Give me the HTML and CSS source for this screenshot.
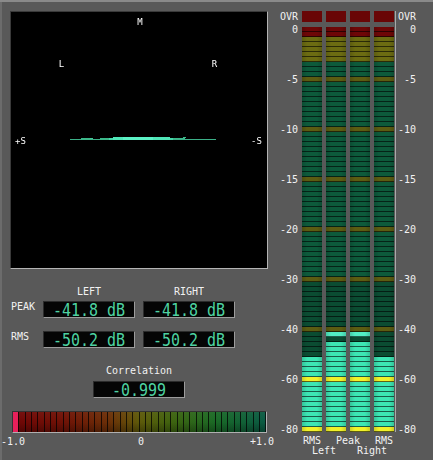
FILE: index.html
```html
<!DOCTYPE html>
<html lang="en">
<head>
  <meta charset="UTF-8" />
  <meta name="viewport" content="width=device-width, initial-scale=1.0"/>
  <title>Stereo Meter</title>
  <link rel="stylesheet" href="styles.css">
</head>
<body>

  <div class="window">
    <div class="left-panel">

      <div class="scope">
        <svg width="256" height="256" viewBox="0 0 256 256">
          <g class="scope-labels">
            <text x="129" y="12.5">M</text>
            <text x="50.5" y="54.5">L</text>
            <text x="203.5" y="54.5">R</text>
            <text x="9.5" y="131.5">+S</text>
            <text x="245.5" y="131.5">-S</text>
          </g>
          <rect x="59" y="127" width="146" height="1" fill="#3cb088"/>
          <rect x="70" y="126" width="9" height="2" fill="#3cb88a"/>
          <rect x="79" y="126" width="3" height="1" fill="#46c898"/>
          <rect x="89" y="126" width="9" height="2" fill="#3cb88a"/>
          <rect x="98" y="126" width="64" height="2" fill="#46d8aa"/>
          <rect x="102" y="125" width="57" height="3" fill="#50e6b8"/>
          <rect x="112" y="125" width="30" height="3" fill="#5cf2c6"/>
          <rect x="162" y="126" width="12" height="1" fill="#3cb88a"/>
          <rect x="172" y="125" width="3" height="1" fill="#3cb88a"/>
        </svg>
      </div>

      <div class="readouts">
        <span></span>
        <span class="col-head">LEFT</span>
        <span class="col-head">RIGHT</span>

        <span class="row-label">PEAK</span>
        <div class="lcd"><span>-41.8 dB</span></div>
        <div class="lcd"><span>-41.8 dB</span></div>

        <span class="row-label">RMS</span>
        <div class="lcd"><span>-50.2 dB</span></div>
        <div class="lcd"><span>-50.2 dB</span></div>
      </div>

      <div class="correlation">
        <div class="corr-title">Correlation</div>
        <div class="lcd corr-value"><span>-0.999</span></div>
        <div class="corr-bar"></div>
        <div class="corr-scale">
          <span>-1.0</span>
          <span class="mid">0</span>
          <span>+1.0</span>
        </div>
      </div>

    </div>

    <div class="meter">
      <div class="scale scale-left">
        <div class="ovr-label">OVR</div>
        <div class="ticks">
          <div>0</div><div>-5</div><div>-10</div><div>-15</div><div>-20</div>
          <div>-30</div><div>-40</div><div>-60</div><div>-80</div>
        </div>
      </div>

      <div class="bars-wrap">
        <div class="bars" id="bars"></div>
        <div class="bar-names">
          <span class="c1">RMS</span>
          <span class="c23">Peak</span>
          <span class="c4">RMS</span>
          <span class="c12">Left</span>
          <span class="c34">Right</span>
        </div>
      </div>

      <div class="scale scale-right">
        <div class="ovr-label">OVR</div>
        <div class="ticks">
          <div>0</div><div>-5</div><div>-10</div><div>-15</div><div>-20</div>
          <div>-30</div><div>-40</div><div>-60</div><div>-80</div>
        </div>
      </div>
    </div>
  </div>

  <script>
    // segment 0 is the top "0 dB" row, 80 is the bottom "-80" row
    const SEGMENTS = 81;
    const columns = [
      { from: 66 },
      { from: 63, hold: 61 },
      { from: 63, hold: 61 },
      { from: 66 }
    ];

    function segmentClass(k, col) {
      if (k === col.hold) return "seg hold";
      if (k >= col.from) return (k === 70 || k === 80) ? "seg on-yellow" : "seg on";
      if (k < 2) return "seg red";
      if (k < 7) return "seg yellow";
      if (k % 10 === 0) return "seg mark";
      return k >= 50 ? "seg green dim" : "seg green";
    }

    function buildBars() {
      const bars = document.getElementById("bars");
      for (const col of columns) {
        const bar = document.createElement("div");
        bar.className = "bar";

        const ovr = document.createElement("div");
        ovr.className = "ovr";
        bar.appendChild(ovr);

        for (let k = 0; k < SEGMENTS; k++) {
          const seg = document.createElement("div");
          seg.className = segmentClass(k, col);
          bar.appendChild(seg);
        }
        bars.appendChild(bar);
      }
    }

    buildBars();
  </script>

</body>
</html>
```

FILE: styles.css
```css
body {
  margin: 0;
  background: #595959;
  font-family: "DejaVu Sans Mono", monospace;
  font-size: 10px;
  color: #f2f2f2;
}
.window {
  display: flex;
  width: 433px;
  height: 460px;
  box-shadow: inset 0 2px 0 #8a8a8a, inset 2px 0 0 #6c6c6c;
  overflow: hidden;
}

/* left side: scope, readouts, correlation */
.left-panel {
  width: 270px;
  padding: 11px 0 0 10px;
  box-sizing: border-box;
}
.scope {
  width: 256px;
  height: 256px;
  background: #000;
  border: 1px solid;
  border-color: #3a3a3a #b4b4b4 #b4b4b4 #3a3a3a;
}
.scope svg {
  display: block;
  will-change: transform;
}
.scope-labels text {
  fill: #fff;
  font-family: "DejaVu Sans Mono", monospace;
  font-size: 9px;
  text-anchor: middle;
}

.readouts {
  display: grid;
  grid-template-columns: 24px 92px 92px;
  grid-template-rows: 15px 30px 17px;
  column-gap: 8px;
  margin: 17px 0 0 1px;
  line-height: 12px;
}
.col-head {
  text-align: center;
}
.lcd {
  height: 17px;
  background: #050505;
  border: 1px solid;
  border-color: #2c2c2c #9c9c9c #9c9c9c #2c2c2c;
  box-sizing: border-box;
  display: flex;
  align-items: center;
  justify-content: center;
  color: #4fd3a2;
  font-size: 15px;
}
.lcd span {
  display: inline-block;
  line-height: 12px;
  transform: scaleY(1.15);
  white-space: pre;
}

.correlation {
  display: flex;
  flex-direction: column;
  align-items: center;
  width: 258px;
  margin-top: 17px;
}
.corr-title {
  line-height: 12px;
}
.corr-value {
  width: 92px;
  margin-top: 4px;
}
.corr-bar {
  align-self: flex-start;
  width: 255px;
  height: 22px;
  margin: 13px 0 0 2px;
  box-sizing: border-box;
  border: 1px solid;
  border-color: #333 #b0b0b0 #b0b0b0 #333;
  background:
    linear-gradient(to right, #e8205a 0 5px, transparent 5px),
    repeating-linear-gradient(to right, transparent 0 5.33px, rgba(0, 0, 0, 0.75) 5.33px 6.33px),
    linear-gradient(to bottom, rgba(255, 255, 255, 0.04), transparent 50%, rgba(0, 0, 0, 0.3)),
    linear-gradient(to right, #700606, #701206 20%, #6c3008 38%, #5e5a0a 50%, #3c6410 64%, #1a6a26 80%, #0a5a44);
}
.corr-scale {
  align-self: flex-start;
  display: grid;
  grid-template-columns: 1fr auto 1fr;
  width: 273px;
  margin: 3px 0 0 -9px;
  line-height: 12px;
}
.corr-scale span:last-child {
  text-align: right;
}
.corr-scale .mid {
  padding-left: 7px;
}

/* right side: level meter */
.meter {
  display: flex;
  padding-top: 11px;
}
.scale {
  display: flex;
  flex-direction: column;
  text-align: right;
}
.scale-left {
  width: 28px;
}
.scale-right {
  width: 20px;
}
.ovr-label {
  height: 11px;
  line-height: 11px;
}
.ticks {
  display: flex;
  flex-direction: column;
  gap: 45px;
  margin-top: 5px;
}
.ticks div {
  height: 5px;
  line-height: 5px;
  white-space: nowrap;
}

.bars-wrap {
  margin-left: 4px;
}
.bars {
  display: flex;
  gap: 4px;
  padding-right: 1px;
  border-right: 1px solid #a8a8a8;
}
.bar {
  display: flex;
  flex-direction: column;
  width: 20px;
}
.ovr {
  height: 11px;
  margin-bottom: 5px;
  background: #690606;
}
.seg {
  height: 4px;
  border-bottom: 1px solid rgba(0, 0, 0, 0.6);
  background-image: linear-gradient(to right, rgba(0, 0, 0, 0.15), transparent 25%, transparent 75%, rgba(0, 0, 0, 0.15));
}
.seg.red { background-color: #6e0707; }
.seg.yellow { background-color: #6c6c12; }
.seg.green { background-color: #0d5a3b; }
.seg.green.dim { background-color: #0b4c32; }
.seg.mark { background-color: #5c5c12; }
.seg.on { background-color: #3de6b4; }
.seg.hold { background-color: #52eec4; }
.seg.on-yellow { background-color: #f2f22a; }

.bar-names {
  display: grid;
  grid-template-columns: repeat(4, 20px);
  column-gap: 4px;
  margin-top: 4px;
  line-height: 10px;
  text-align: center;
  white-space: nowrap;
}
.bar-names .c1 { grid-column: 1; }
.bar-names .c23 { grid-column: 2 / 4; }
.bar-names .c4 { grid-column: 4; }
.bar-names .c12 { grid-column: 1 / 3; }
.bar-names .c34 { grid-column: 3 / 5; }
```
